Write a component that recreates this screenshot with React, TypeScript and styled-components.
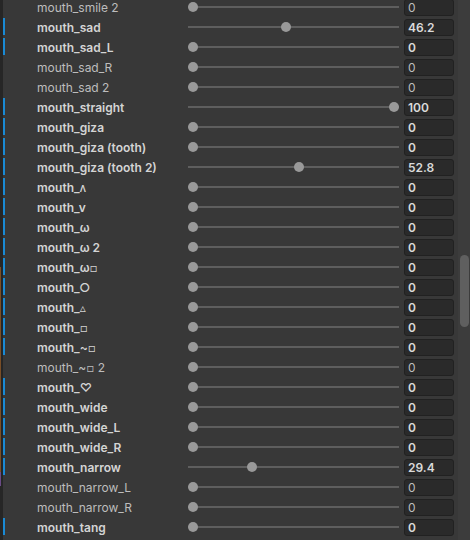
import React from "react";
import styled, { createGlobalStyle } from "styled-components";

const Global = createGlobalStyle`
  html, body { margin: 0; padding: 0; background: #383838; }
  body { font-family: Inter, "Noto Sans", "DejaVu Sans", sans-serif; }
`;

type Shape = { name: string; value: number; overridden: boolean };

const shapes: Shape[] = [
  { name: "mouth_smile 2", value: 0, overridden: false },
  { name: "mouth_sad", value: 46.2, overridden: true },
  { name: "mouth_sad_L", value: 0, overridden: true },
  { name: "mouth_sad_R", value: 0, overridden: false },
  { name: "mouth_sad 2", value: 0, overridden: false },
  { name: "mouth_straight", value: 100, overridden: true },
  { name: "mouth_giza", value: 0, overridden: true },
  { name: "mouth_giza (tooth)", value: 0, overridden: true },
  { name: "mouth_giza (tooth 2)", value: 52.8, overridden: true },
  { name: "mouth_\u1d27", value: 0, overridden: true },
  { name: "mouth_v", value: 0, overridden: true },
  { name: "mouth_\u03c9", value: 0, overridden: true },
  { name: "mouth_\u03c9 2", value: 0, overridden: true },
  { name: "mouth_\u03c9\u25ab", value: 0, overridden: true },
  { name: "mouth_\u25cb", value: 0, overridden: true },
  { name: "mouth_\u25b5", value: 0, overridden: true },
  { name: "mouth_\u25ab", value: 0, overridden: true },
  { name: "mouth_~\u25ab", value: 0, overridden: true },
  { name: "mouth_~\u25ab 2", value: 0, overridden: false },
  { name: "mouth_\u2661", value: 0, overridden: true },
  { name: "mouth_wide", value: 0, overridden: true },
  { name: "mouth_wide_L", value: 0, overridden: true },
  { name: "mouth_wide_R", value: 0, overridden: true },
  { name: "mouth_narrow", value: 29.4, overridden: true },
  { name: "mouth_narrow_L", value: 0, overridden: false },
  { name: "mouth_narrow_R", value: 0, overridden: false },
  { name: "mouth_tang", value: 0, overridden: true },
];

const Window = styled.div`
  width: 470px;
  height: 540px;
  overflow: hidden;
  display: flex;
  background: #383838;
`;

const Edge = styled.div`
  width: 3px;
  flex: none;
  background:
    linear-gradient(
      to bottom,
      transparent 0,
      transparent 267px,
      #7a4e26 267px,
      #7a4e26 472px,
      #6a4a86 472px,
      #6a4a86 486px,
      transparent 486px
    ) left top / 1px 100% no-repeat,
    #262626;
`;

const List = styled.div`
  flex: 1;
  display: flex;
  flex-direction: column;
  margin-top: -3px;
`;

const Row = styled.div`
  height: 20px;
  flex: none;
  display: flex;
  align-items: center;
`;

const Marker = styled.div<{ $on: boolean }>`
  width: 2px;
  height: 17px;
  align-self: flex-start;
  margin-top: 1px;
  background: ${(p) => (p.$on ? "#1a8ad4" : "transparent")};
  flex: none;
`;

const Label = styled.div<{ $bold: boolean }>`
  margin-left: 32px;
  width: 151px;
  flex: none;
  font-size: 12px;
  font-weight: ${(p) => (p.$bold ? 600 : 400)};
  color: ${(p) => (p.$bold ? "#d4d4d4" : "#bdbdbd")};
  white-space: nowrap;
  overflow: hidden;
  line-height: 20px;
  padding-top: 1px;
`;

const Track = styled.div`
  position: relative;
  width: 211px;
  height: 2px;
  flex: none;
  background: #5e5e5e;
`;

const Thumb = styled.div`
  position: absolute;
  top: -4px;
  width: 10px;
  height: 10px;
  margin-left: -5px;
  border-radius: 50%;
  background: #999999;
`;

const Field = styled.div<{ $bold: boolean }>`
  margin-left: 5px;
  width: 50px;
  height: 17px;
  box-sizing: border-box;
  flex: none;
  background: #2a2a2a;
  border: 1px solid #212121;
  border-radius: 3px;
  padding-left: 3px;
  font-size: 12px;
  line-height: 16px;
  font-weight: ${(p) => (p.$bold ? 600 : 400)};
  color: ${(p) => (p.$bold ? "#dadada" : "#bdbdbd")};
`;

const ScrollTrack = styled.div`
  width: 12px;
  flex: none;
  background: #3c3c3c;
  display: flex;
  flex-direction: column;
  align-items: center;
`;

const ScrollThumb = styled.div`
  margin-top: 255px;
  margin-left: 1px;
  width: 9px;
  height: 72px;
  border-radius: 5px;
  background: #5f5f5f;
`;

function Slider({ value }: { value: number }) {
  // thumb centre travels from 5px to 206px along the 211px track
  const left = 5 + (value / 100) * 201;
  return (
    <Track>
      <Thumb style={{ left }} />
    </Track>
  );
}

export default function App() {
  return (
    <>
      <Global />
      <Window>
        <Edge />
        <List>
          {shapes.map((s) => (
            <Row key={s.name}>
              <Marker $on={s.overridden} />
              <Label $bold={s.overridden}>{s.name}</Label>
              <Slider value={s.value} />
              <Field $bold={s.overridden}>{s.value}</Field>
            </Row>
          ))}
        </List>
        <ScrollTrack>
          <ScrollThumb />
        </ScrollTrack>
      </Window>
    </>
  );
}
